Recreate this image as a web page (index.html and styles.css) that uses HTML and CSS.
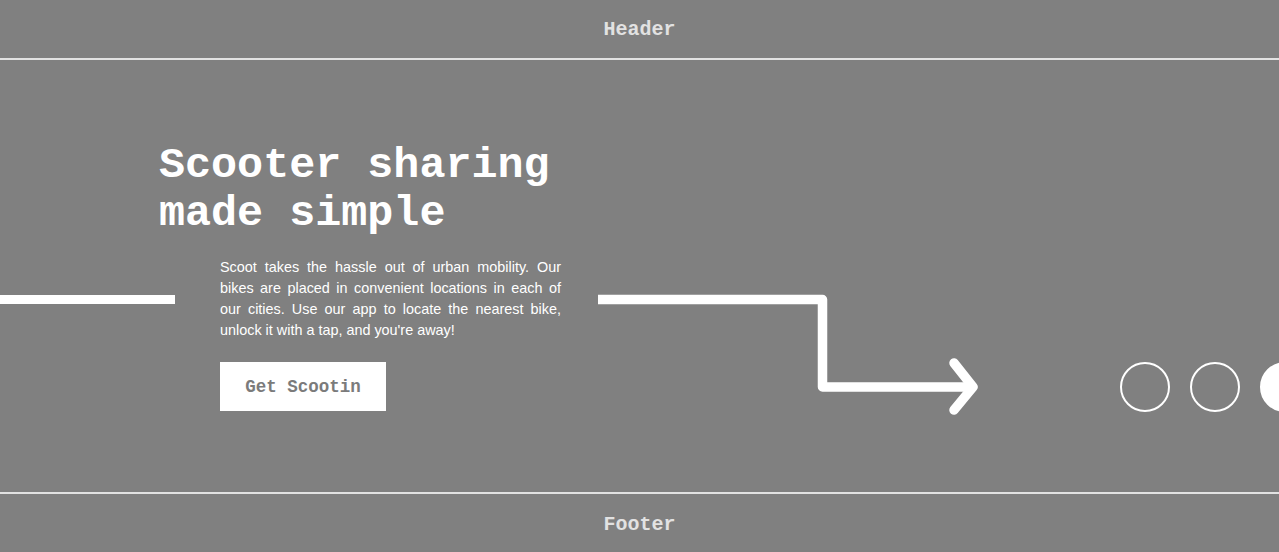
FILE: index.html
```html
<!DOCTYPE html>
<html lang="en">
<head>
<meta charset="utf-8">
<title>Scoot</title>
<link rel="stylesheet" href="styles.css">
</head>
<body>
<header class="site-header">Header</header>
<main class="hero">
  <h1 class="hero-title">Scooter sharing<br>made simple</h1>
  <div class="hero-row">
    <div class="deco-line"></div>
    <div class="hero-copy">
      <p class="hero-text">Scoot takes the hassle out of urban mobility. Our bikes are placed in convenient locations in each of our cities. Use our app to locate the nearest bike, unlock it with a tap, and you're away!</p>
      <a class="btn" href="#">Get Scootin</a>
    </div>
    <svg class="deco-arrow" width="390" height="130" viewBox="0 0 390 130" aria-hidden="true">
      <path d="M0 9.5 H224.5 V97 H373" fill="none" stroke="#fff" stroke-width="9.5" stroke-linejoin="round"/>
      <path d="M356 73 L375 97 L356 120" fill="none" stroke="#fff" stroke-width="9.5" stroke-linecap="round" stroke-linejoin="round"/>
    </svg>
    <div class="dots">
      <span class="dot"></span>
      <span class="dot"></span>
      <span class="dot dot-filled"></span>
    </div>
  </div>
</main>
<footer class="site-footer">Footer</footer>
</body>
</html>
```

FILE: styles.css
```css
html, body {
  margin: 0;
  padding: 0;
  overflow: hidden;
}
body {
  background: #808080;
  width: 1279px;
  height: 552px;
  font-family: "Courier New", Courier, "Nimbus Mono PS", "Nimbus Mono L", FreeMono, "Liberation Mono", monospace;
}
.site-header,
.site-footer {
  height: 58px;
  display: flex;
  align-items: center;
  justify-content: center;
  color: #e2e2e2;
  font-weight: bold;
  font-size: 20px;
}
.site-header {
  border-bottom: 2px solid #e2e2e2;
}
.site-footer {
  border-top: 2px solid #e2e2e2;
  padding-top: 2px;
  box-sizing: border-box;
  height: 60px;
}
.hero {
  height: 432px;
  box-sizing: border-box;
  padding-top: 82px;
  overflow: hidden;
}
.hero-title {
  margin: 0 0 19px 159px;
  font-size: 43.4px;
  line-height: 48px;
  font-weight: bold;
  color: #fff;
}
.hero-row {
  display: flex;
  align-items: flex-start;
}
.deco-line {
  flex: 0 0 175px;
  height: 9px;
  margin-top: 38px;
  background: #fff;
}
.hero-copy {
  flex: 0 0 341px;
  margin-left: 45px;
}
.hero-text {
  margin: 0 0 21px;
  font-family: "Liberation Sans", Arial, sans-serif;
  font-size: 14.4px;
  line-height: 21px;
  color: #fff;
  text-align: justify;
}
.btn {
  display: flex;
  align-items: center;
  justify-content: center;
  width: 166px;
  height: 49px;
  background: #fff;
  color: #7b7b7b;
  font-weight: bold;
  font-size: 17.5px;
  text-decoration: none;
}
.deco-arrow {
  flex: 0 0 auto;
  display: block;
  margin-left: 37px;
  margin-top: 33px;
}
.dots {
  flex: 0 0 auto;
  display: flex;
  gap: 20px;
  margin-left: 132px;
  margin-top: 105px;
}
.dot {
  width: 50px;
  height: 50px;
  box-sizing: border-box;
  border: 2px solid #fff;
  border-radius: 50%;
  flex: 0 0 auto;
}
.dot-filled {
  background: #fff;
}
```
